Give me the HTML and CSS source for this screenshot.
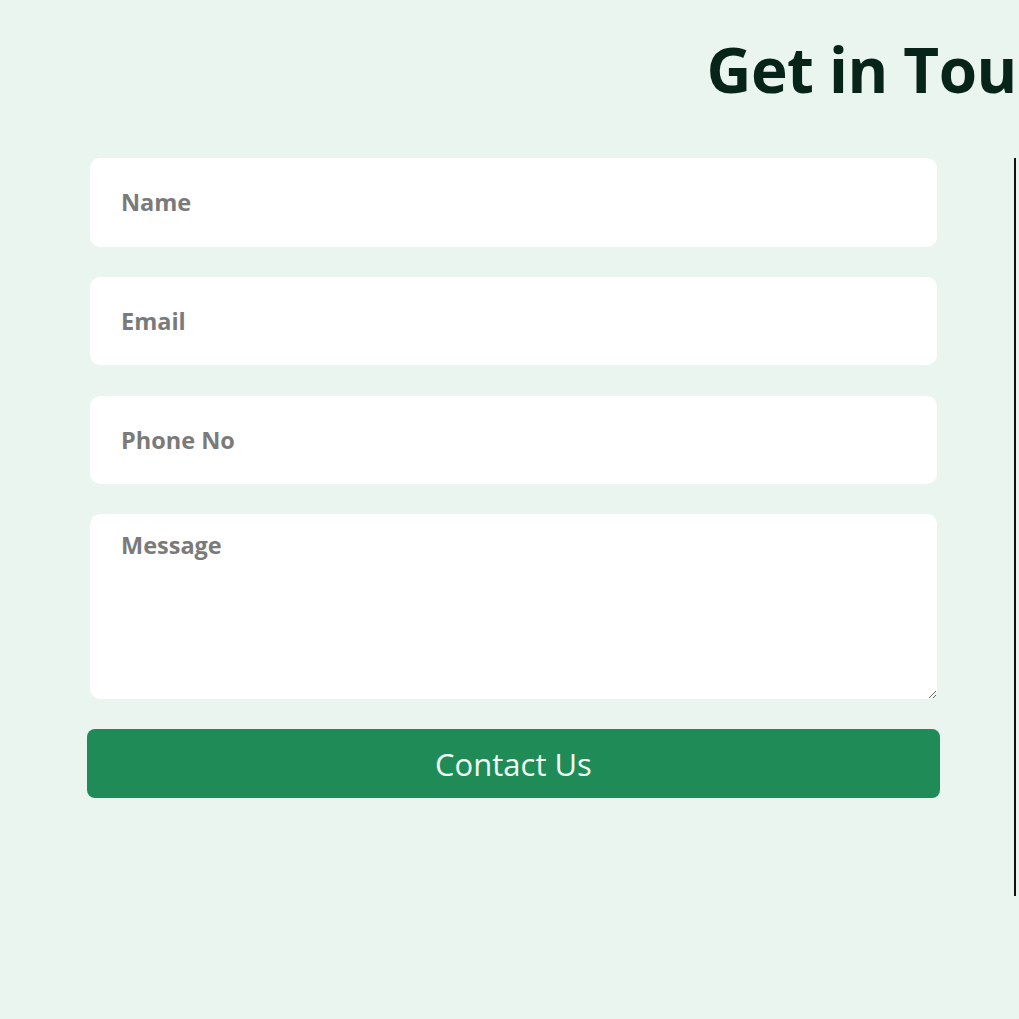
FILE: index.html
```html
<!DOCTYPE html>
<html lang="en">
<head>
<meta charset="utf-8">
<title>Get in Touch</title>
<link rel="stylesheet" href="styles.css">
</head>
<body>
<section class="contact">
  <h1 class="contact-title">Get in Touch</h1>
  <div class="contact-body">
    <form class="contact-form">
      <input class="field" type="text" placeholder="Name">
      <input class="field" type="email" placeholder="Email">
      <input class="field" type="tel" placeholder="Phone No">
      <textarea class="field field-message" placeholder="Message"></textarea>
      <button class="submit" type="button">Contact Us</button>
    </form>
    <div class="map-frame"></div>
  </div>
</section>
</body>
</html>
```
FILE: styles.css
```css
html, body {
  margin: 0;
  padding: 0;
  overflow: hidden;
  background: #ebf5f0;
}
body {
  font-family: "Open Sans", "Noto Sans", sans-serif;
  width: 1019px;
  height: 1019px;
}
.contact {
  width: 1708px;
  box-sizing: border-box;
  padding: 0 0 0 87px;
}
.contact-title {
  margin: 0;
  padding-top: 27px;
  height: 158px;
  box-sizing: border-box;
  text-align: center;
  font-size: 62px;
  font-weight: 700;
  line-height: 84px;
  color: #07241a;
  letter-spacing: -0.5px;
}
.contact-body {
  display: flex;
  gap: 74px;
  align-items: flex-start;
}
.contact-form {
  width: 853px;
  display: flex;
  flex-direction: column;
  align-items: center;
  gap: 30.3px;
}
.field {
  display: block;
  width: 847px;
  height: 88.5px;
  box-sizing: border-box;
  border: none;
  outline: none;
  border-radius: 10px;
  background: #ffffff;
  padding: 0 30px 0 31px;
  font-family: inherit;
  font-size: 23.5px;
  font-weight: 700;
  color: #333;
}
.field::placeholder {
  color: #7a7a7a;
  opacity: 1;
}
.field-message {
  height: 184.5px;
  padding-top: 15px;
  resize: vertical;
}
.submit {
  width: 853px;
  height: 69px;
  border: none;
  border-radius: 8px;
  background: #1f8c57;
  color: #eefaf3;
  font-family: inherit;
  font-size: 31px;
  font-weight: 400;
  cursor: pointer;
}
.map-frame {
  width: 604px;
  height: 738px;
  border-left: 2px solid #111;
  flex-shrink: 0;
}
```
